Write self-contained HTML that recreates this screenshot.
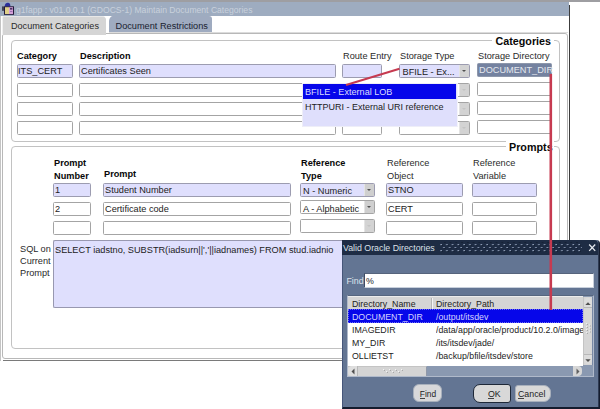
<!DOCTYPE html>
<html><head><meta charset="utf-8">
<style>
*{box-sizing:border-box;margin:0;padding:0}
html,body{width:600px;height:409px;overflow:hidden;background:#fff;font-family:"Liberation Sans",sans-serif;font-size:9.2px;color:#222}
.a{position:absolute}
.t{position:absolute;white-space:pre;line-height:1}
.fld{position:absolute;border:1px solid #a4a4a4;border-radius:1.5px;background:#fff;height:14px}
.cur{background:#dfdffd;border-color:#9c9cb0}
.btn{position:absolute;right:0;top:0;bottom:0;width:10px;background:#d3d3d3;border-left:1px solid #e4e4e4}
.btn:after{content:"";position:absolute;left:1.5px;top:5px;border-left:2.7px solid transparent;border-right:2.7px solid transparent;border-top:2.7px solid #c4c4c4}
.btn.on:after{border-top-color:#505050}
.frame{position:absolute;border:1px solid #c2c2c2;border-radius:4px}
.b{font-weight:bold;color:#080808;font-size:9.2px}
.lb{color:#2a2a2a}
.d{font-size:8.8px}
</style></head><body>
<!-- top strip -->
<div class="a" style="left:0;top:0;width:600px;height:2px;background:#9e9ea2"></div>
<!-- main window -->
<div class="a" style="left:0;top:2px;width:1px;height:359px;background:#c4c4c4"></div>
<!-- title bar -->
<div class="a" style="left:0;top:2px;width:569px;height:14px;background:#9eacc0"></div>
<div class="t" style="left:16px;top:6px;font-size:8.6px;color:#c9d1dc">g1fapp : v01.0.0.1 (GDOCS-1) Maintain Document Categories</div>
<!-- icon -->
<svg class="a" style="left:0;top:0" width="16" height="16" viewBox="0 0 16 16">
<path d="M4.6 6.5 C4.8 3.5 6.5 2.6 8 2.7 C9.6 2.8 10.6 4 10.4 6.5Z" fill="#2c2f9a"/>
<rect x="4" y="6.3" width="10" height="8.5" fill="#241a3a"/>
<rect x="5" y="7.2" width="4" height="6.8" fill="#e0d08a"/>
<rect x="9" y="7.2" width="4" height="6.8" fill="#d4a0d8"/>
<rect x="10" y="8.2" width="2.4" height="1.3" fill="#2a1a48"/>
<rect x="10" y="11" width="2.4" height="1" fill="#9a70b0"/>
<rect x="2.2" y="6.4" width="1.6" height="4.4" fill="#2a2a3c"/>
</svg>
<!-- right dark edge -->
<div class="a" style="left:569px;top:5px;width:1px;height:356px;background:#3c3c3c"></div>
<!-- bottom dark edge -->
<div class="a" style="left:3px;top:359.5px;width:566px;height:1.5px;background:#7a7a7a"></div>

<!-- tab canvas -->
<div class="a" style="left:2px;top:33px;width:566px;height:326px;border:1px solid #b8b8b8;border-radius:3px"></div>
<div class="a" style="left:2px;top:32px;width:566px;height:1px;background:#dcdcdc"></div>
<!-- tabs -->
<div class="a" style="left:2px;top:16px;width:104px;height:19px;background:#d5d5d5;border-left:1px solid #f0f0f0;border-top:1px solid #e8e8e8;border-radius:2px 3px 0 0"></div>
<div class="t" style="left:11px;top:22px;color:#2a2a2a;font-size:9.1px">Document Categories</div>

<div class="a" style="left:109px;top:16px;width:102.5px;height:16px;background:#9fabc0;border-radius:0 3px 0 0"></div>
<div class="a" style="left:106px;top:16px;width:3px;height:17px;background:#fff"></div>
<svg class="a" style="left:103px;top:16px" width="10" height="6"><path d="M0.5 0 L9.5 0 Q6.5 0.8 6 5 L3.5 5 Q3 0.8 0.5 0Z" fill="#fff"/></svg>
<div class="t" style="left:115.5px;top:22px;color:#1a2230;font-size:9.2px">Document Restrictions</div>

<!-- Categories frame -->
<div class="frame" style="left:11px;top:40px;width:549px;height:102px"></div>
<div class="a" style="left:492px;top:36px;width:62px;height:8px;background:#fff"></div>
<div class="t b" style="left:495.5px;top:36.3px;font-size:10.75px">Categories</div>

<div class="t b" style="left:17px;top:52px;font-size:9.2px">Category</div>
<div class="t b" style="left:80px;top:52px">Description</div>
<div class="t lb" style="left:343px;top:52px">Route Entry</div>
<div class="t lb" style="left:400px;top:52px">Storage Type</div>
<div class="t lb" style="left:478px;top:52px">Storage Directory</div>

<!-- rows -->
<div class="fld cur" style="left:17px;top:64px;width:56px"></div>
<div class="t" style="left:18px;top:67px">ITS_CERT</div>
<div class="fld cur" style="left:79px;top:64px;width:257px"></div>
<div class="t" style="left:81px;top:67px">Certificates Seen</div>
<div class="fld cur" style="left:342px;top:64px;width:40px"></div>
<div class="fld cur" style="left:399px;top:64px;width:71px"><div class="btn on"></div></div>
<div class="t" style="left:402.5px;top:68.3px">BFILE - Ex...</div>
<div class="fld" style="left:477px;top:63px;width:75px;background:#7482a0;border-color:#8d97ab"></div>
<div class="t" style="left:479px;top:66.3px;color:#e4e8ef">DOCUMENT_DIR</div>

<div class="fld" style="left:17px;top:83px;width:56px"></div>
<div class="fld" style="left:79px;top:83px;width:257px"></div>
<div class="fld" style="left:342px;top:83px;width:40px"></div>
<div class="fld" style="left:399px;top:83px;width:71px"><div class="btn"></div></div>
<div class="fld" style="left:477px;top:82px;width:75px"></div>

<div class="fld" style="left:17px;top:102px;width:56px"></div>
<div class="fld" style="left:79px;top:102px;width:257px"></div>
<div class="fld" style="left:342px;top:102px;width:40px"></div>
<div class="fld" style="left:399px;top:102px;width:71px"><div class="btn"></div></div>
<div class="fld" style="left:477px;top:101px;width:75px"></div>

<div class="fld" style="left:17px;top:121px;width:56px"></div>
<div class="fld" style="left:79px;top:121px;width:257px"></div>
<div class="fld" style="left:342px;top:121px;width:40px"></div>
<div class="fld" style="left:399px;top:121px;width:71px"><div class="btn"></div></div>
<div class="fld" style="left:477px;top:120px;width:75px"></div>

<!-- dropdown list -->
<div class="a" style="left:302px;top:83px;width:156px;height:44px;background:#dfdffc;border:1px solid #eeeef8;border-right-color:#f4f4fa"></div>
<div class="a" style="left:303px;top:84px;width:153px;height:15px;background:#0606ea"></div>
<div class="t" style="left:305px;top:88.3px;color:#dcdcff;font-size:9.1px">BFILE - External LOB</div>
<div class="t" style="left:305px;top:103px;font-size:9px">HTTPURI - External URI reference</div>

<!-- Prompts frame -->
<div class="frame" style="left:11px;top:146px;width:549px;height:203px"></div>
<div class="a" style="left:506px;top:141px;width:48px;height:10px;background:#fff"></div>
<div class="t b" style="left:509px;top:142.3px;font-size:10.75px">Prompts</div>

<div class="t b" style="left:54px;top:157px;line-height:12.5px">Prompt
Number</div>
<div class="t b" style="left:104px;top:170px">Prompt</div>
<div class="t b" style="left:301px;top:157px;line-height:12.5px">Reference
Type</div>
<div class="t lb" style="left:387px;top:157px;line-height:12.5px">Reference
Object</div>
<div class="t lb" style="left:473px;top:157px;line-height:12.5px">Reference
Variable</div>

<div class="fld cur" style="left:53px;top:183px;width:38px"></div>
<div class="t" style="left:55px;top:186px">1</div>
<div class="fld cur" style="left:103px;top:183px;width:188px"></div>
<div class="t" style="left:105px;top:186px">Student Number</div>
<div class="fld cur" style="left:300px;top:183px;width:75px"><div class="btn on" style="background:#cfcfcf"></div></div>
<div class="t" style="left:303px;top:186.9px">N - Numeric</div>
<div class="fld cur" style="left:386px;top:183px;width:77px"></div>
<div class="t" style="left:388px;top:186px">STNO</div>
<div class="fld cur" style="left:472px;top:183px;width:65px"></div>

<div class="fld" style="left:53px;top:202px;width:38px"></div>
<div class="t" style="left:55px;top:205px">2</div>
<div class="fld" style="left:103px;top:202px;width:188px"></div>
<div class="t" style="left:105px;top:205px">Certificate code</div>
<div class="fld" style="left:300px;top:200px;width:75px"><div class="btn on" style="background:#cfcfcf"></div></div>
<div class="t" style="left:303px;top:204.7px">A - Alphabetic</div>
<div class="fld" style="left:386px;top:202px;width:77px"></div>
<div class="t" style="left:388px;top:205px">CERT</div>
<div class="fld" style="left:472px;top:202px;width:65px"></div>

<div class="fld" style="left:53px;top:221px;width:38px"></div>
<div class="fld" style="left:103px;top:221px;width:188px"></div>
<div class="fld" style="left:300px;top:218.6px;width:75px"><div class="btn"></div></div>
<div class="fld" style="left:386px;top:221px;width:77px"></div>
<div class="fld" style="left:472px;top:221px;width:65px"></div>

<div class="t lb" style="left:20px;top:242.5px;line-height:12.4px">SQL on
Current
Prompt</div>
<div class="a" style="left:53px;top:240px;width:300px;height:68px;background:#dfdffd;border:1px solid #9898b0;border-right:none;border-radius:2px 0 0 2px"></div>
<div class="t" style="left:55px;top:245.8px;font-size:9.2px">SELECT iadstno, SUBSTR(iadsurn||','||iadnames) FROM stud.iadnio</div>

<!-- Dialog -->
<div class="a" style="left:341.6px;top:240px;width:258.4px;height:169px;background:#637593;border-right:1px solid #141c2e;border-bottom:2px solid #141c2e;border-left:1px solid #46567a;border-top-right-radius:4px"></div>
<div class="a" style="left:341.6px;top:240px;width:256.4px;height:14.6px;background:#1e2c44;border-top-right-radius:4px"></div>
<div class="t" style="left:343px;top:244.3px;color:#dce1e9;font-size:8.8px">Valid Oracle Directories</div>
<svg class="a" style="left:440px;top:242px" width="142" height="11">
<defs><pattern id="dp" width="5.75" height="6" patternUnits="userSpaceOnUse">
<rect x="0.5" y="2" width="1.2" height="1.2" fill="#b4c2dc"/><rect x="3.3" y="5" width="1.2" height="1.2" fill="#b4c2dc"/>
<rect x="1.5" y="3" width="1" height="1" fill="#0e1828"/><rect x="4.3" y="0" width="1" height="1" fill="#0e1828"/>
</pattern></defs>
<rect width="142" height="11" fill="url(#dp)"/>
</svg>
<svg class="a" style="left:588px;top:243px" width="9" height="10"><path d="M1.2 1.5 L7.2 7.9 M7.2 1.5 L1.2 7.9" stroke="#e4e8ee" stroke-width="1.35"/></svg>
<div class="t d" style="left:346.5px;top:276.5px;color:#dde3ec">Find</div>
<div class="a" style="left:364px;top:273px;width:230px;height:15px;background:#fff;border:1px solid #c8d0dc;border-left-color:#3e4c64;border-top-color:#56647c"></div>
<div class="t d" style="left:366px;top:276.5px">%</div>

<div class="a" style="left:598px;top:241px;width:1px;height:166px;background:#2e3a52"></div>
<!-- grid -->
<div class="a" style="left:347px;top:295px;width:247px;height:82px;background:#8a99b1;border:1px solid #b0bacb;border-top-color:#56667f"></div>
<div class="a" style="left:348px;top:296px;width:235px;height:13.5px;background:#d5d5d5;border-top:1px solid #ececec"></div>
<div class="a" style="left:431px;top:298px;width:1px;height:12px;background:#b4b4b4"></div>
<div class="a" style="left:432px;top:298px;width:1px;height:12px;background:#f4f4f4"></div>
<div class="t d" style="left:352px;top:300px">Directory_Name</div>
<div class="t d" style="left:436px;top:300px">Directory_Path</div>
<div class="a" style="left:348px;top:310px;width:235px;height:56px;background:#fff"></div>
<div class="a" style="left:348px;top:309.3px;width:235px;height:13.3px;background:#0606ea;border:1px dotted #6a6af6"></div>
<div class="t d" style="left:352px;top:313px;color:#d4d4ff">DOCUMENT_DIR</div>
<div class="t d" style="left:436px;top:313px;color:#d4d4ff">/output/itsdev</div>
<div class="t d" style="left:352px;top:326px">IMAGEDIR</div>
<div class="a" style="left:436px;top:324px;width:147px;height:13px;overflow:hidden"><div class="t d" style="left:0;top:2px">/data/app/oracle/product/10.2.0/image</div></div>
<div class="t d" style="left:352px;top:339px">MY_DIR</div>
<div class="t d" style="left:436px;top:339px">/its/itsdev/jade/</div>
<div class="t d" style="left:352px;top:352px">OLLIETST</div>
<div class="t d" style="left:436px;top:352px">/backup/bfile/itsdev/store</div>
<!-- vscroll -->
<div class="a" style="left:583px;top:297px;width:10px;height:68px;background:#d6d6d6;border-left:1px solid #c4c4c4;border-right:1px solid #7888a4"></div>
<div class="a" style="left:584px;top:298px;width:8px;height:10px;background:#dcdcdc;border-radius:4px 4px 0 0;border-bottom:1px solid #b8b8b8"></div>
<svg class="a" style="left:585px;top:301.5px" width="6" height="4"><path d="M0.3 3 L3 0.3 L5.7 3Z" fill="#505050"/></svg>
<div class="a" style="left:584px;top:354px;width:8px;height:10px;background:#dcdcdc;border-radius:0 0 4px 4px;border-top:1px solid #b8b8b8"></div>
<svg class="a" style="left:585px;top:358.5px" width="6" height="4"><path d="M0.3 0.3 L3 3 L5.7 0.3Z" fill="#505050"/></svg>
<svg class="a" style="left:585px;top:322px" width="7" height="14"><g fill="#f0f0f0"><rect x="1" y="1" width="1" height="1"/><rect x="4" y="2.5" width="1" height="1"/><rect x="1" y="4" width="1" height="1"/><rect x="4" y="5.5" width="1" height="1"/><rect x="1" y="7" width="1" height="1"/><rect x="4" y="8.5" width="1" height="1"/><rect x="1" y="10" width="1" height="1"/></g><g fill="#a8a8a8"><rect x="2" y="2" width="1" height="1"/><rect x="5" y="3.5" width="1" height="1"/><rect x="2" y="5" width="1" height="1"/><rect x="5" y="6.5" width="1" height="1"/><rect x="2" y="8" width="1" height="1"/><rect x="5" y="9.5" width="1" height="1"/><rect x="2" y="11" width="1" height="1"/></g></svg>
<!-- hscroll -->
<div class="a" style="left:348px;top:366px;width:79px;height:10px;background:#d4d4d4;border-right:1px solid #9098a8;border-top:1px solid #c4c4c4"></div>
<div class="a" style="left:348px;top:366px;width:10px;height:10px;background:#dedede;border-right:1px solid #b8b8b8;border-radius:4px 0 0 4px"></div>
<svg class="a" style="left:351px;top:368px" width="4" height="7"><path d="M3.5 0.5 L0.5 3.5 L3.5 6.5Z" fill="#505050"/></svg>
<div class="a" style="left:573px;top:366px;width:9px;height:10px;background:#d6d6d6;border-radius:0 4px 4px 0"></div>
<svg class="a" style="left:382px;top:368px" width="22" height="6"><g fill="#f4f4f4"><rect x="1" y="1" width="1" height="1"/><rect x="4" y="3" width="1" height="1"/><rect x="7" y="1" width="1" height="1"/><rect x="10" y="3" width="1" height="1"/><rect x="13" y="1" width="1" height="1"/><rect x="16" y="3" width="1" height="1"/><rect x="19" y="1" width="1" height="1"/></g><g fill="#a8a8a8"><rect x="2" y="2" width="1" height="1"/><rect x="5" y="4" width="1" height="1"/><rect x="8" y="2" width="1" height="1"/><rect x="11" y="4" width="1" height="1"/><rect x="14" y="2" width="1" height="1"/><rect x="17" y="4" width="1" height="1"/><rect x="20" y="2" width="1" height="1"/></g></svg>
<svg class="a" style="left:576px;top:368px" width="4" height="7"><path d="M0.5 0.5 L3.5 3.5 L0.5 6.5Z" fill="#606060"/></svg>

<!-- buttons -->
<div class="a" style="left:413px;top:384px;width:29px;height:18px;background:#d8d8da;border:1px solid #a8b0bc;border-radius:6px"></div>
<div class="t d" style="left:419.8px;top:389.5px;font-size:8.4px">Find</div>
<div class="a" style="left:420px;top:398px;width:5px;height:1px;background:#444"></div>
<div class="a" style="left:473px;top:384px;width:38px;height:19px;background:#d8d8d8;border:1.5px solid #1e2838;border-radius:7px 3px 3px 7px"></div>
<div class="t d" style="left:488px;top:390px">OK</div>
<div class="a" style="left:488px;top:398px;width:6px;height:1px;background:#444"></div>
<div class="a" style="left:515px;top:385px;width:36px;height:17px;background:#d8d8d8;border:1px solid #a8b0bc;border-radius:3px 7px 7px 3px"></div>
<div class="t d" style="left:518px;top:390px">Cancel</div>
<div class="a" style="left:518px;top:398px;width:6px;height:1px;background:#444"></div>

<!-- red lines (on top) -->
<svg class="a" style="left:0;top:0" width="600" height="409">
<line x1="346" y1="85" x2="399.5" y2="68.8" stroke="#c63a50" stroke-width="2"/>
<line x1="550.8" y1="74" x2="550.8" y2="310" stroke="#c63a50" stroke-width="2.6"/>
</svg>
</body></html>
